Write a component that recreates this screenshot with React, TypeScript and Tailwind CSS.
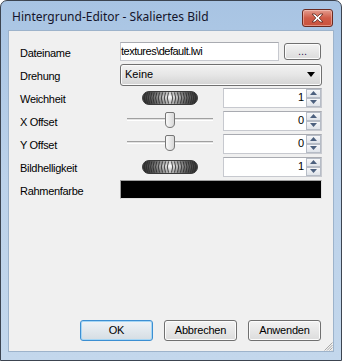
import React from "react";

const font = { fontFamily: '"Liberation Sans", Arial, sans-serif' };

function Jog() {
  const ridgesL = [3.5, 5.5, 7.5, 9.8, 12.2, 14.8, 17.5, 20.5, 23.5, 26.5];
  const ridgesR = ridgesL.map((x) => 56 - x);
  return (
    <svg width="56" height="14" viewBox="0 0 56 14">
      <defs>
        <linearGradient id="jg" x1="0" y1="0" x2="1" y2="0">
          <stop offset="0" stopColor="#333" />
          <stop offset="0.22" stopColor="#7a7a7a" />
          <stop offset="0.5" stopColor="#ffffff" />
          <stop offset="0.78" stopColor="#7a7a7a" />
          <stop offset="1" stopColor="#333" />
        </linearGradient>
        <linearGradient id="jv" x1="0" y1="0" x2="0" y2="1">
          <stop offset="0" stopColor="#000" stopOpacity="0.25" />
          <stop offset="0.4" stopColor="#000" stopOpacity="0" />
          <stop offset="1" stopColor="#000" stopOpacity="0.3" />
        </linearGradient>
      </defs>
      <rect x="0.5" y="0.5" width="55" height="13" rx="6.5" fill="url(#jg)" stroke="#444" />
      <rect x="0.5" y="0.5" width="55" height="13" rx="6.5" fill="url(#jv)" />
      {ridgesL.map((x) => (
        <path key={"l" + x} d={`M${x} 1.5 Q${x - 2.4} 7 ${x} 12.5`} stroke="#2a2a2a" strokeOpacity="0.85" strokeWidth="1" fill="none" />
      ))}
      {ridgesR.map((x) => (
        <path key={"r" + x} d={`M${x} 1.5 Q${x + 2.4} 7 ${x} 12.5`} stroke="#2a2a2a" strokeOpacity="0.85" strokeWidth="1" fill="none" />
      ))}
    </svg>
  );
}

function Slider() {
  return (
    <div className="relative w-[103px] h-[23px]">
      <div className="absolute left-[7px] top-[9px] w-[86px] h-[3px] border-t border-[#a0a0a0] border-b border-b-white bg-[#e3e3e3]" />
      <svg className="absolute left-[45px] top-[3px]" width="10" height="16" viewBox="0 0 10 16">
        <defs>
          <linearGradient id="tg" x1="0" y1="0" x2="1" y2="0">
            <stop offset="0" stopColor="#fbfbfb" />
            <stop offset="1" stopColor="#d6d6d6" />
          </linearGradient>
        </defs>
        <path d="M0.5 2 Q0.5 0.5 2 0.5 H8 Q9.5 0.5 9.5 2 V11 Q9.5 15.5 5 15.5 Q0.5 15.5 0.5 11 Z" fill="url(#tg)" stroke="#767676" />
      </svg>
    </div>
  );
}

function Spin({ value }: { value: string }) {
  return (
    <div className="w-[99px] h-[20px] bg-white border border-[#c7c9cf] border-t-[#a9abb1] flex items-center">
      <div className="flex-1 text-right pr-[2px] text-[11px] text-black leading-none" style={font}>
        {value}
      </div>
      <div className="w-[15px] h-[18px] flex flex-col">
        {[0, 1].map((i) => (
          <div
            key={i}
            className="h-[9px] w-[15px] border border-[#b6bcc6] bg-gradient-to-b from-[#f6f7f9] to-[#dfe3e9] flex items-center justify-center"
          >
            <svg width="7" height="4" viewBox="0 0 7 4">
              {i === 0 ? <path d="M3.5 0 L7 4 H0 Z" fill="#4c607e" /> : <path d="M0 0 H7 L3.5 4 Z" fill="#4c607e" />}
            </svg>
          </div>
        ))}
      </div>
    </div>
  );
}

function Label({ children }: { children: React.ReactNode }) {
  return (
    <div className="w-[100px] pt-[4px] text-[11px] tracking-[-0.3px] text-black leading-none" style={font}>
      {children}
    </div>
  );
}

function Btn({ children, def }: { children: React.ReactNode; def?: boolean }) {
  return (
    <div
      className={
        "w-[73px] h-[21px] rounded-[3px] border flex items-center justify-center text-[11px] tracking-[-0.2px] text-black " +
        (def
          ? "border-[#3c8fd2] bg-gradient-to-b from-[#eef3f7] to-[#d5dde3] shadow-[inset_0_0_0_1px_#a5d6f5]"
          : "border-[#707070] bg-gradient-to-b from-[#f3f3f3] to-[#dcdcdc] shadow-[inset_0_0_0_1px_#fcfcfc]")
      }
      style={font}
    >
      {children}
    </div>
  );
}

export default function App() {
  return (
    <div className="w-[342px] h-[361px] bg-white">
      <div className="w-[342px] h-[361px] flex flex-col rounded-t-[7px] border border-[#3c4450] bg-gradient-to-b from-[#a8c4e3] via-[#bcd2ea] to-[#c3d7ec]">
        <div className="h-[29px] flex items-start justify-between pl-[11px] pr-[8px]">
          <div
            className="pt-[10px] text-[12px] leading-none text-[#14142a]"
            style={{ fontFamily: '"Noto Sans", "Open Sans", sans-serif' }}
          >
            Hintergrund-Editor - Skaliertes Bild
          </div>
          <div className="mt-[8px] w-[31px] h-[18px] rounded-[3px] border border-[#6b2a20] bg-gradient-to-b from-[#e39c8f] via-[#cf5c48] to-[#c9523c] flex items-center justify-center shadow-[inset_0_0_0_1px_rgba(255,220,210,0.45)]">
            <svg width="13" height="10" viewBox="0 0 13 10">
              <path
                d="M1 1 H4 L6.5 3.6 L9 1 H12 L8.2 5 L12 9 H9 L6.5 6.4 L4 9 H1 L4.8 5 Z"
                fill="#ffffff"
                stroke="#5a2a22"
                strokeWidth="0.8"
                strokeLinejoin="round"
              />
            </svg>
          </div>
        </div>
        <div className="mx-[7px] h-[322px] bg-[#f0f0f0] border border-[#9db3cb] flex flex-col pl-[11px] pr-[11px] pt-[9px] pb-[10px] relative">
          <div className="flex h-[23px] items-center">
            <Label>Dateiname</Label>
            <div className="w-[159px] h-[19px] bg-white border border-[#c7c9cf] border-t-[#a9abb1] flex items-center text-[11px] tracking-[-0.5px] leading-none text-black" style={font}>
              textures\default.lwi
            </div>
            <div className="ml-[5px] w-[37px] h-[17px] rounded-[3px] border border-[#707070] bg-gradient-to-b from-[#f3f3f3] to-[#dcdcdc] shadow-[inset_0_0_0_1px_#fcfcfc] flex items-center justify-center text-[11px] leading-none text-[#3a1a5a]" style={font}>
              ...
            </div>
          </div>
          <div className="flex h-[23px] items-center">
            <Label>Drehung</Label>
            <div className="w-[202px] h-[22px] rounded-[3px] border border-[#707070] bg-gradient-to-b from-[#f2f2f2] via-[#e6e6e6] to-[#d3d3d3] shadow-[inset_0_0_0_1px_#fbfbfb] flex items-center justify-between pl-[4px] pr-[6px] text-[11px] leading-none text-black" style={font}>
              <span>Keine</span>
              <svg width="8" height="5" viewBox="0 0 8 5">
                <path d="M0 0 H8 L4 5 Z" fill="#000" />
              </svg>
            </div>
          </div>
          <div className="flex h-[23px] items-center">
            <Label>Weichheit</Label>
            <div className="w-[103px] flex items-center pl-[22px] pt-[1px]">
              <Jog />
            </div>
            <Spin value="1" />
          </div>
          <div className="flex h-[23px] items-center">
            <Label>X Offset</Label>
            <Slider />
            <Spin value="0" />
          </div>
          <div className="flex h-[23px] items-center">
            <Label>Y Offset</Label>
            <Slider />
            <Spin value="0" />
          </div>
          <div className="flex h-[23px] items-center">
            <Label>Bildhelligkeit</Label>
            <div className="w-[103px] flex items-center pl-[22px] pt-[1px]">
              <Jog />
            </div>
            <Spin value="1" />
          </div>
          <div className="flex h-[23px] items-center">
            <Label>Rahmenfarbe</Label>
            <div className="w-[202px] h-[19px] bg-black border border-[#a0a0a0] border-b-[#e0e0e0] border-r-[#e0e0e0]" />
          </div>
          <div className="mt-auto flex justify-end gap-[11px] pr-[1px]">
            <Btn def>OK</Btn>
            <Btn>Abbrechen</Btn>
            <Btn>Anwenden</Btn>
          </div>
          <svg className="absolute right-[0px] bottom-[0px]" width="11" height="11" viewBox="0 0 11 11">
            {[0, 1, 2, 3].map((i) => (
              <path key={i} d={`M${10 - i * 2.5} 10.5 L10.5 ${10 - i * 2.5}`} stroke="#a8a8a8" strokeWidth="1" />
            ))}
          </svg>
        </div>
      </div>
    </div>
  );
}
